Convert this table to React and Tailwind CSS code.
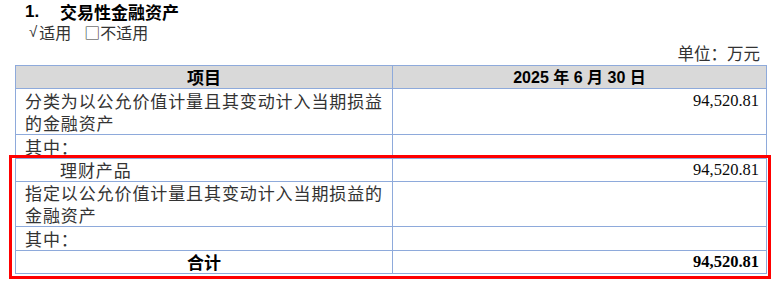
import React from "react";

const cjk = "font-['Noto_Sans_CJK_SC',sans-serif]";
const num = "font-['Liberation_Serif','Times_New_Roman',serif]";

export default function App() {
  const cell = "border border-[#8eaadb] p-0";
  const left = `${cell} pl-[9px] pr-[4px] text-[17px] leading-[22px] tracking-[0.9px] text-[#333] ${cjk} align-middle`;
  const right = `${cell} pr-[7px] text-right text-[16.5px] leading-[22px] text-[#0a0a0a] ${num} align-middle`;
  return (
    <div className="relative w-[775px] h-[281px] bg-white overflow-hidden">
      <div className={`h-[22px] pt-[2px] pl-[25px] flex items-center font-bold text-[17px] leading-[18px] text-black ${cjk}`}>
        <span className="font-['Liberation_Sans',sans-serif] w-[35px]">1.</span>
        <span>交易性金融资产</span>
      </div>
      <div className={`h-[20px] pl-[29px] flex items-center text-[16px] leading-[18px] text-[#333] ${cjk}`}>
        <span className="font-['Liberation_Sans',sans-serif] text-[15px] mr-[2px]">√</span>
        <span>适用</span>
        <span className="ml-[13px]">□不适用</span>
      </div>
      <div className={`h-[22px] mb-[1px] pr-[15px] flex items-center justify-end text-[16.5px] leading-[20px] text-[#333] ${cjk}`}>
        单位：万元
      </div>
      <table className="ml-[15px] w-[751px] border-collapse table-fixed">
        <colgroup>
          <col className="w-[377px]" />
          <col className="w-[374px]" />
        </colgroup>
        <tbody>
          <tr className="h-[23px] bg-[#d9d9d9]">
            <td className={`${cell} text-center font-bold text-[17px] leading-[20px] text-black ${cjk}`}>项目</td>
            <td className={`${cell} text-center font-bold text-[16px] leading-[20px] text-black font-['Liberation_Sans',sans-serif]`}>
              2025 <span className={cjk}>年</span> 6 <span className={cjk}>月</span> 30 <span className={cjk}>日</span>
            </td>
          </tr>
          <tr className="h-[46px]">
            <td className={left}>分类为以公允价值计量且其变动计入当期损益的金融资产</td>
            <td className={`${right} !align-top pt-[1px]`}>94,520.81</td>
          </tr>
          <tr className="h-[24px]">
            <td className={left}>其中：</td>
            <td className={right}></td>
          </tr>
          <tr className="h-[23px]">
            <td className={`${left} pl-[44px]`}>理财产品</td>
            <td className={right}>94,520.81</td>
          </tr>
          <tr className="h-[44px]">
            <td className={left}>指定以公允价值计量且其变动计入当期损益的金融资产</td>
            <td className={right}></td>
          </tr>
          <tr className="h-[24px]">
            <td className={left}>其中：</td>
            <td className={right}></td>
          </tr>
          <tr className="h-[23px]">
            <td className={`${cell} text-center font-bold text-[17px] leading-[20px] text-black ${cjk}`}>合计</td>
            <td className={`${right} font-bold text-black`}>94,520.81</td>
          </tr>
        </tbody>
      </table>
      <div className="absolute left-[9px] top-[155px] w-[762px] h-[124px] border-[3px] border-[#ff0000] pointer-events-none" />
    </div>
  );
}
